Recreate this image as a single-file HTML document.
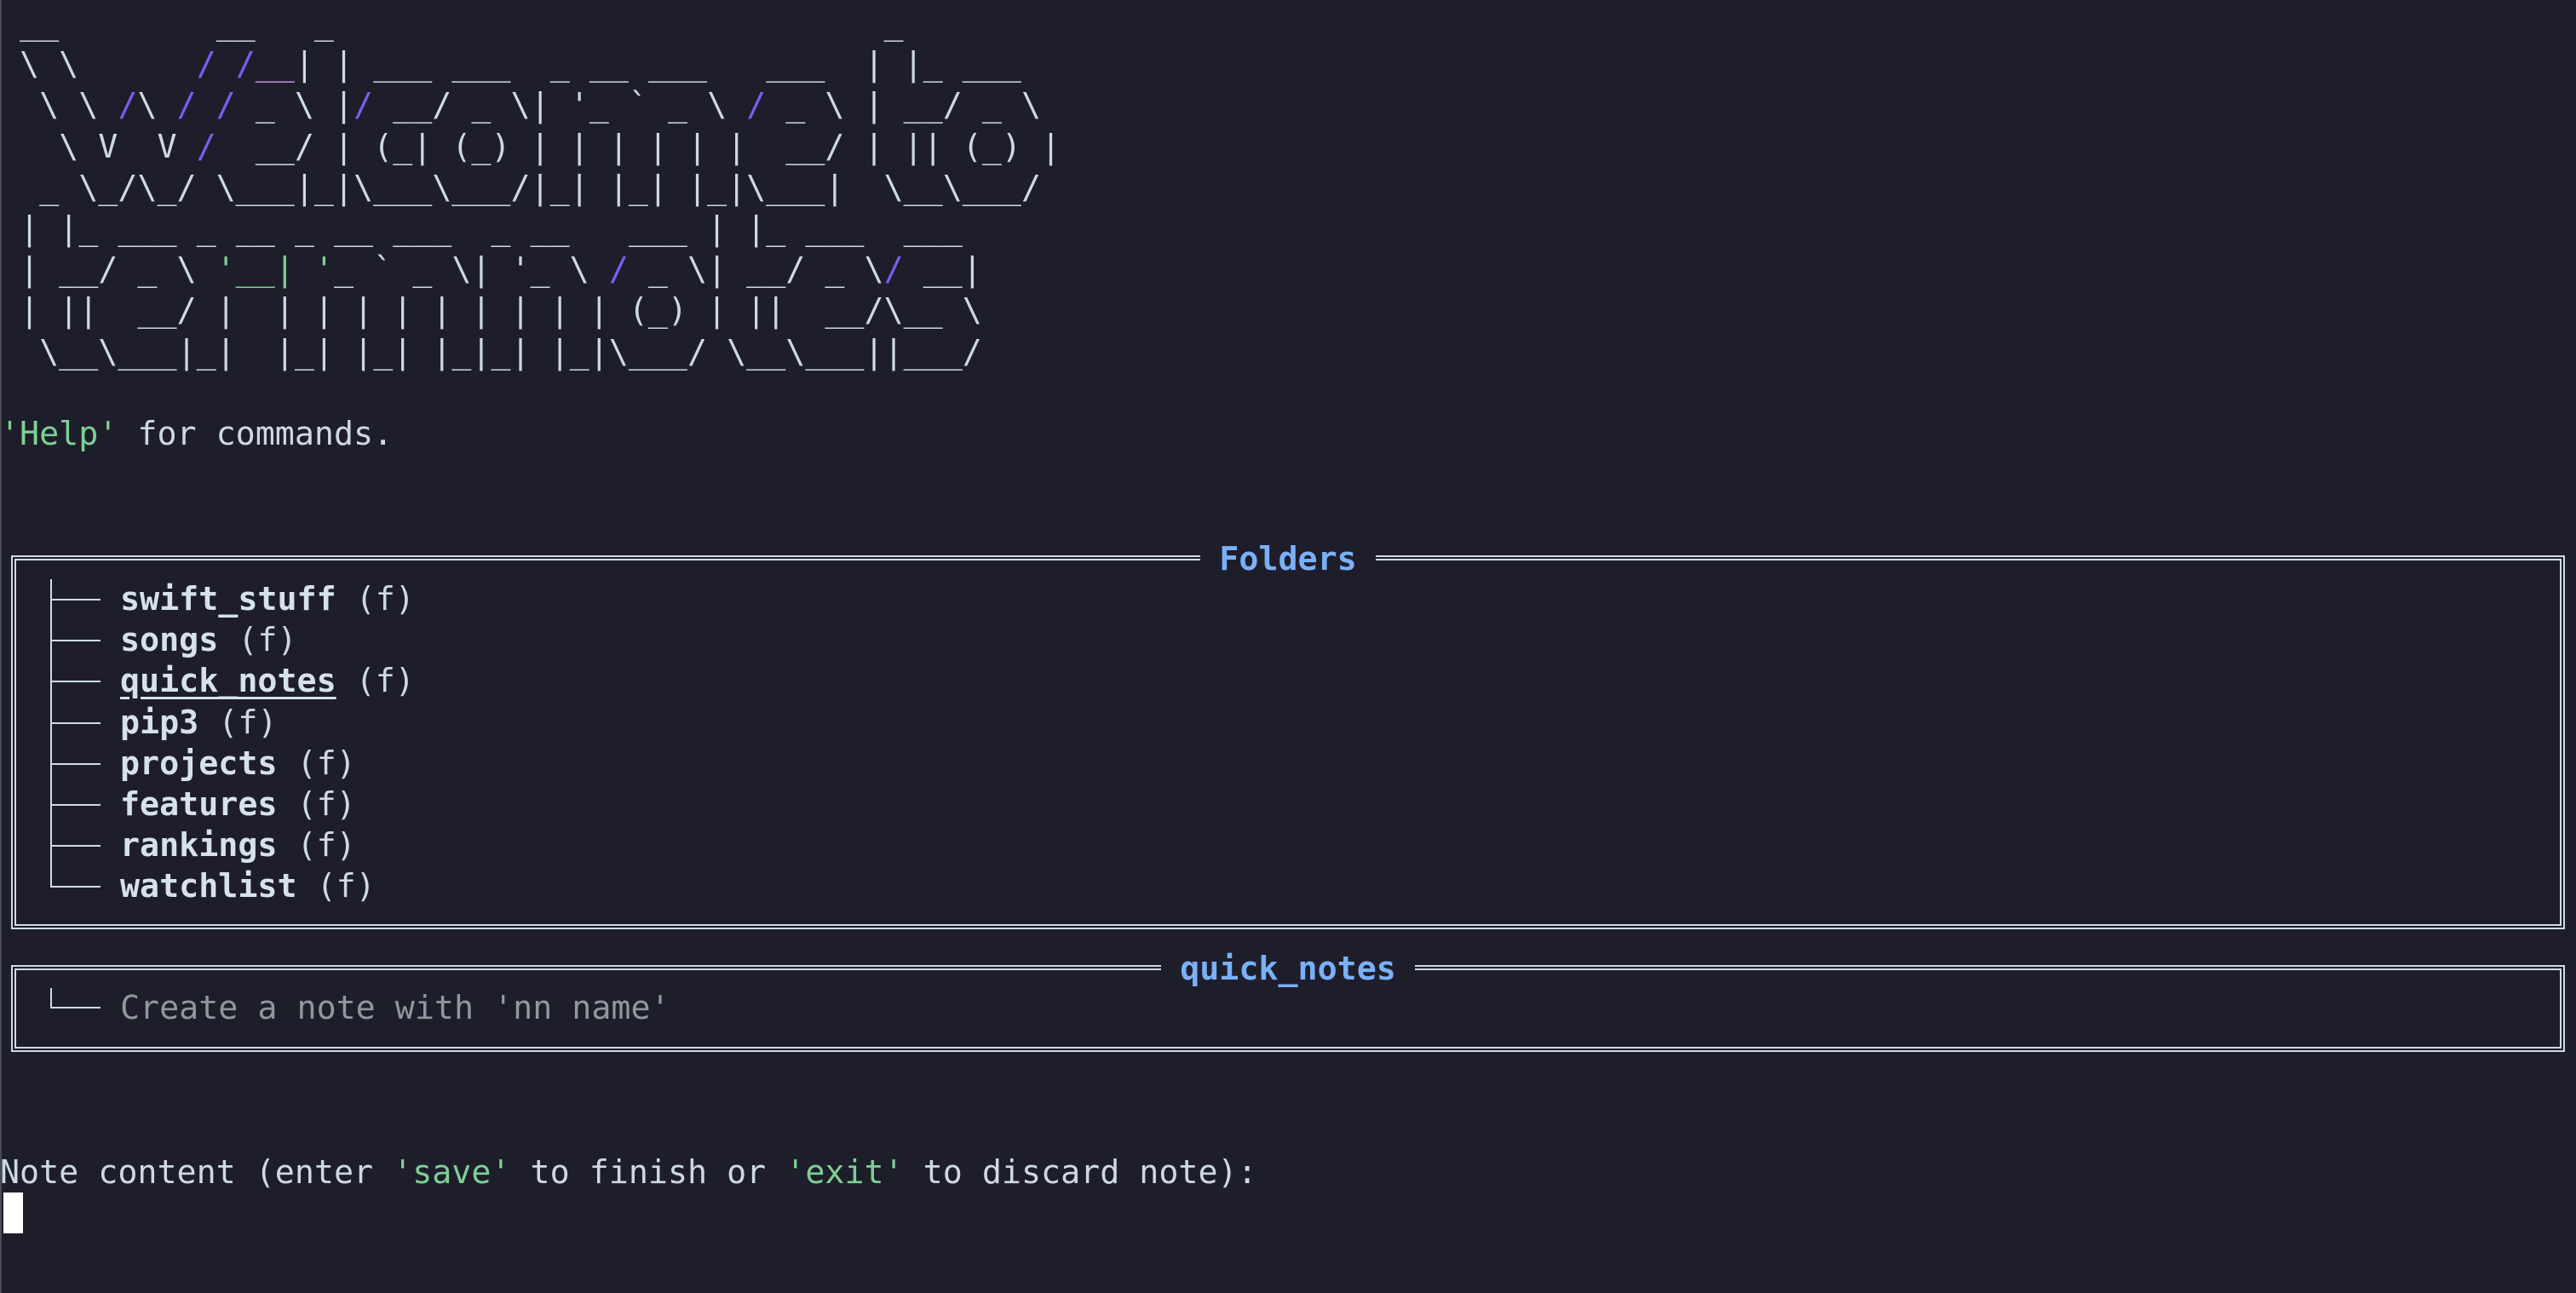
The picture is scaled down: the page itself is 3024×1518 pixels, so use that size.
<!DOCTYPE html>
<html><head><meta charset="utf-8">
<style>
html,body{margin:0;padding:0;}
body{width:3024px;height:1518px;background:#1e1e2b;position:relative;overflow:hidden;
font-family:"DejaVu Sans Mono","Liberation Mono",monospace;font-size:38.3px;color:#cdd9e3;}
.edge{position:absolute;left:0;top:0;width:2px;height:1518px;background:#4a4a55;}
pre{margin:0;font:inherit;white-space:pre;position:absolute;line-height:48.2px;}
.p{color:#7c5cf0}.k{color:#c290e0}.g{color:#7fcf95}
.box{position:absolute;left:13px;right:13px;border:6px double #cfdbe4;box-sizing:border-box;}
.title{position:absolute;top:-25px;left:0;right:0;text-align:center;line-height:48px;}
.title span{background:#1e1e2b;padding:0 22px;color:#7ab0f7;font-weight:bold;}
.b{font-weight:bold;color:#d6e2ea}
.tv{position:absolute;width:2px;background:#cfdbe4;}
.th{position:absolute;height:2px;background:#cfdbe4;}
.cursor{position:absolute;left:4px;top:1400px;width:23px;height:48px;background:#fff;}
</style></head><body>
<div class="edge"></div>
<pre style="left:0;top:4px;"> __        __   _                            _
 \ \      <span class="p">/ /</span><span class="k">__</span>| | ___ ___  _ __ ___   ___  | |_ ___
  \ \ <span class="p">/</span>\ <span class="p">/ /</span> _ \ |<span class="p">/</span> __/ _ \| '_ ` _ \ <span class="p">/</span> _ \ | __/ _ \
   \ V  V <span class="p">/</span>  __/ | (_| (_) | | | | | |  __/ | || (_) |
  _ \_/\_/ \___|_|\___\___/|_| |_| |_|\___|  \__\___/
 | |_ ___ _ __ _ __ ___  _ __   ___ | |_ ___  ___
 | __/ _ \ <span class="g">'__|</span> <span class="g">'</span>_ ` _ \| '_ \ <span class="p">/</span> _ \| __/ _ \<span class="p">/</span> __|
 | ||  __/ |  | | | | | | | | | (_) | ||  __/\__ \
  \__\___|_|  |_| |_| |_|_| |_|\___/ \__\___||___/

<span class="g">'Help'</span> for commands.</pre>

<div class="box" style="top:652px;height:439px;"><div class="title"><span>Folders</span></div></div>
<div class="tv" style="left:59px;top:680px;height:361px;"></div>
<div class="th" style="left:59px;top:703px;width:59px;"></div>
<div class="th" style="left:59px;top:751px;width:59px;"></div>
<div class="th" style="left:59px;top:799px;width:59px;"></div>
<div class="th" style="left:59px;top:848px;width:59px;"></div>
<div class="th" style="left:59px;top:896px;width:59px;"></div>
<div class="th" style="left:59px;top:944px;width:59px;"></div>
<div class="th" style="left:59px;top:992px;width:59px;"></div>
<div class="th" style="left:59px;top:1040px;width:59px;"></div>
<pre style="left:141px;top:680px;"><span class="b">swift_stuff</span> (f)
<span class="b">songs</span> (f)
<span class="b" style="text-decoration:underline;text-underline-offset:6px">quick_notes</span> (f)
<span class="b">pip3</span> (f)
<span class="b">projects</span> (f)
<span class="b">features</span> (f)
<span class="b">rankings</span> (f)
<span class="b">watchlist</span> (f)</pre>

<div class="box" style="top:1133px;height:102px;"><div class="title"><span>quick_notes</span></div></div>
<div class="tv" style="left:59px;top:1160px;height:24px;"></div>
<div class="th" style="left:59px;top:1182px;width:59px;"></div>
<pre style="left:141px;top:1160px;color:#8f979f;">Create a note with 'nn name'</pre>

<pre style="left:0;top:1353px;">Note content (enter <span class="g">'save'</span> to finish or <span class="g">'exit'</span> to discard note):</pre>
<div class="cursor"></div>
</body></html>
